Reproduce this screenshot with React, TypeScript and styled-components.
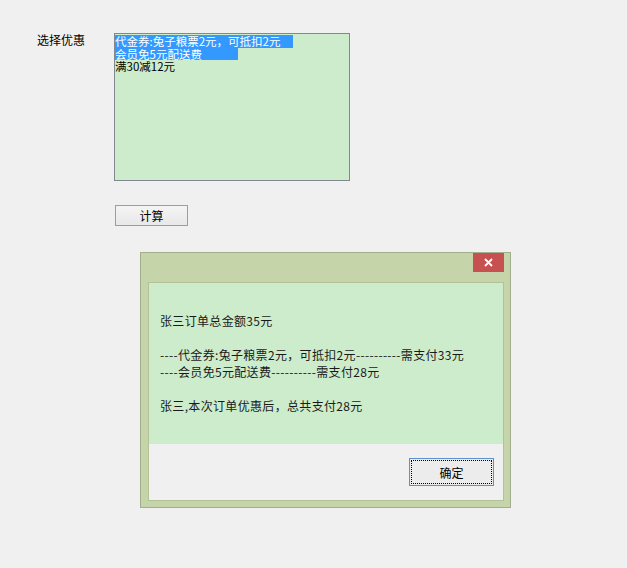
import React from 'react';
import styled, { createGlobalStyle } from 'styled-components';

const GlobalStyle = createGlobalStyle`
  html, body {
    margin: 0;
    padding: 0;
    background: #f0f0f0;
  }
  body {
    font-family: "Noto Sans CJK SC", "Microsoft YaHei", sans-serif;
    font-size: 12px;
    color: #000;
  }
`;

const Page = styled.div`
  width: 627px;
  height: 568px;
  padding: 33px 0 0 37px;
  box-sizing: border-box;
  display: flex;
  flex-direction: column;
`;

const FormRow = styled.div`
  display: flex;
  align-items: flex-start;
`;

const FieldLabel = styled.div`
  width: 77px;
  line-height: 14px;
`;

const ListBox = styled.div`
  width: 236px;
  height: 148px;
  box-sizing: border-box;
  border: 1px solid #828790;
  background: #cdeccb;
  padding-top: 1px;
  display: flex;
  flex-direction: column;
  align-items: flex-start;
`;

const ListItem = styled.div<{ $selected?: boolean; $width?: number }>`
  height: 12.5px;
  line-height: 12.5px;
  font-size: 11.5px;
  white-space: nowrap;
  padding-right: 1px;
  min-width: ${p => (p.$width ? `${p.$width}px` : 'auto')};
  background: ${p => (p.$selected ? '#3399ff' : 'transparent')};
  color: ${p => (p.$selected ? '#fff' : '#000')};
`;

const ActionButton = styled.button`
  margin: 24px 0 0 78px;
  width: 73px;
  height: 21px;
  padding: 0;
  border: 1px solid #7aa3d6;
  background: linear-gradient(#f4f4f4, #e8e8e8);
  font-family: inherit;
  font-size: 12px;
  line-height: 17px;
  color: #000;
`;

const Dialog = styled.div`
  margin: 26px 0 0 103px;
  width: 371px;
  height: 256px;
  box-sizing: border-box;
  border: 1px solid #a3ae8e;
  background: #c6d4aa;
  display: flex;
  flex-direction: column;
  padding: 0 6px 6px 7px;
`;

const TitleBar = styled.div`
  height: 29px;
  display: flex;
  justify-content: flex-end;
  align-items: flex-start;
`;

const CloseButton = styled.div`
  width: 31px;
  height: 19px;
  background: #c75050;
  color: #fff;
  display: flex;
  align-items: center;
  justify-content: center;
`;

const ClientArea = styled.div`
  flex: 1;
  border: 1px solid #b3c197;
  display: flex;
  flex-direction: column;
  background: #f0f0f0;
`;

const MessageArea = styled.div`
  height: 161px;
  box-sizing: border-box;
  background: #cdeccb;
  padding: 29px 0 0 11px;
`;

const MessageLine = styled.div`
  height: 17px;
  line-height: 17px;
  white-space: nowrap;
  letter-spacing: 0.33px;
  color: #1a1a1a;
`;

const ButtonBar = styled.div`
  flex: 1;
  display: flex;
  justify-content: flex-end;
  align-items: flex-start;
  padding: 14px 9px 0 0;
`;

const OkButton = styled.button`
  width: 85px;
  height: 28px;
  padding: 0;
  border: 1px solid #5b8fd0;
  background: #ececec;
  outline: 1px dotted #000;
  outline-offset: -3px;
  font-family: inherit;
  font-size: 12px;
  color: #000;
`;

const coupons = [
  { text: '代金券:兔子粮票2元，可抵扣2元', selected: true, width: 177 },
  { text: '会员免5元配送费', selected: true, width: 122 },
  { text: '满30减12元', selected: false },
];

const message = [
  '张三订单总金额35元',
  '',
  '----代金券:兔子粮票2元，可抵扣2元----------需支付33元',
  '----会员免5元配送费----------需支付28元',
  '',
  '张三,本次订单优惠后，总共支付28元',
];

export default function App() {
  return (
    <>
      <GlobalStyle />
      <Page>
        <FormRow>
          <FieldLabel>选择优惠</FieldLabel>
          <ListBox>
            {coupons.map(c => (
              <ListItem key={c.text} $selected={c.selected} $width={c.width}>
                {c.text}
              </ListItem>
            ))}
          </ListBox>
        </FormRow>
        <ActionButton>计算</ActionButton>
        <Dialog>
          <TitleBar>
            <CloseButton>
              <svg width="9" height="9" viewBox="0 0 9 9">
                <path d="M1 1 L8 8 M8 1 L1 8" stroke="#fff" strokeWidth="1.8" />
              </svg>
            </CloseButton>
          </TitleBar>
          <ClientArea>
            <MessageArea>
              {message.map((line, i) => (
                <MessageLine key={i}>{line}</MessageLine>
              ))}
            </MessageArea>
            <ButtonBar>
              <OkButton>确定</OkButton>
            </ButtonBar>
          </ClientArea>
        </Dialog>
      </Page>
    </>
  );
}
